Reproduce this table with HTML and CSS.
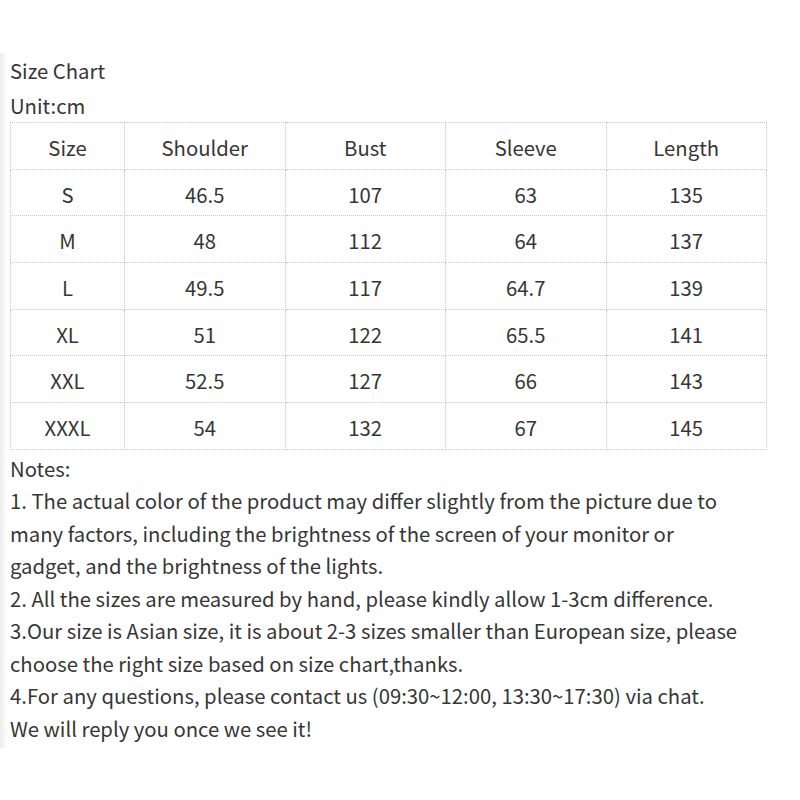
FILE: index.html
```html
<!DOCTYPE html>
<html>
<head>
<meta charset="utf-8">
<link rel="stylesheet" href="styles.css">
</head>
<body>
<div class="page">
  <div class="content">
    <p class="line">Size Chart</p>
    <p class="line">Unit:cm</p>
    <table class="chart">
      <tr><td class="c1">Size</td><td>Shoulder</td><td>Bust</td><td>Sleeve</td><td>Length</td></tr>
      <tr><td class="c1">S</td><td>46.5</td><td>107</td><td>63</td><td>135</td></tr>
      <tr><td class="c1">M</td><td>48</td><td>112</td><td>64</td><td>137</td></tr>
      <tr><td class="c1">L</td><td>49.5</td><td>117</td><td>64.7</td><td>139</td></tr>
      <tr><td class="c1">XL</td><td>51</td><td>122</td><td>65.5</td><td>141</td></tr>
      <tr><td class="c1">XXL</td><td>52.5</td><td>127</td><td>66</td><td>143</td></tr>
      <tr><td class="c1">XXXL</td><td>54</td><td>132</td><td>67</td><td>145</td></tr>
    </table>
    <div class="notes">
      <p>Notes:</p>
      <p>1. The actual color of the product may differ slightly from the picture due to many factors, including the brightness of the screen of your monitor or gadget, and the brightness of the lights.</p>
      <p>2. All the sizes are measured by hand, please kindly allow 1-3cm difference.</p>
      <p>3.Our size is Asian size, it is about 2-3 sizes smaller than European size, please choose the right size based on size chart,thanks.</p>
      <p>4.For any questions, please contact us (09:30~12:00, 13:30~17:30) via chat.</p>
      <p>We will reply you once we see it!</p>
    </div>
  </div>
</div>
</body>
</html>
```

FILE: styles.css
```css
html, body {
  margin: 0;
  padding: 0;
  background: #ffffff;
}
body {
  font-family: "Noto Sans CJK SC", "Noto Sans", sans-serif;
  color: #363636;
  font-size: 20.3px;
}
.page {
  padding-top: 53px;
  width: 800px;
  height: 800px;
  box-sizing: border-box;
}
.content {
  background: linear-gradient(to right, #ececec 0px, #f6f6f6 4px, #ffffff 7px);
  padding: 0 0 0 10px;
  width: 790px;
}
.line {
  margin: 0;
  line-height: 35px;
}
.line + .line {
  line-height: 34px;
}
.chart {
  border-collapse: collapse;
  width: 757px;
  table-layout: fixed;
}
.chart td {
  border: 1px dotted #c8c8c8;
  height: 43.7px;
  padding: 2px 0 0;
  text-align: center;
  vertical-align: middle;
}
.chart td.c1 {
  width: 113px;
}
.notes {
  padding-top: 2px;
  padding-bottom: 4px;
}
.notes p {
  margin: 0;
  line-height: 32.5px;
  width: 735px;
}
```
